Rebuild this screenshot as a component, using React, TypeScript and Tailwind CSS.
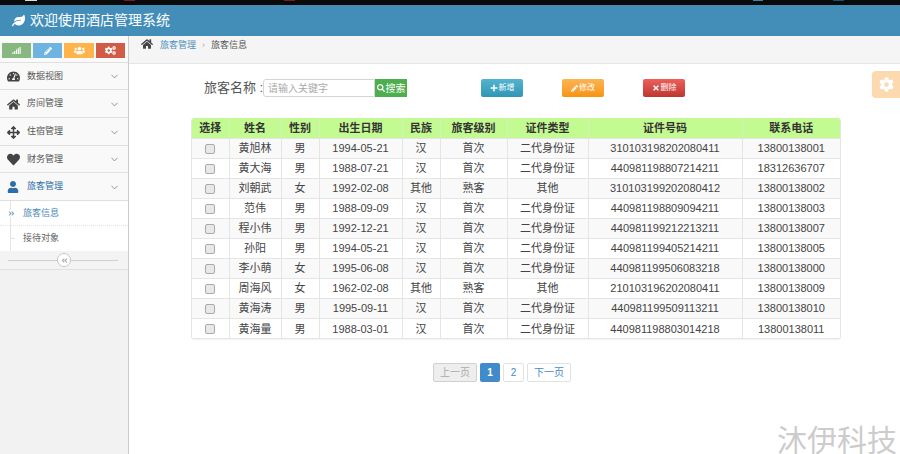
import { FaLeaf, FaSignal, FaPencilAlt, FaUsers, FaCogs, FaTachometerAlt, FaHome, FaArrowsAlt, FaHeart, FaUser, FaAngleDoubleLeft, FaAngleDoubleRight, FaSearch, FaPlus, FaTimes, FaCog } from "react-icons/fa";
import { ChevronDown } from "lucide-react";

const FONT = '"Liberation Sans", "Noto Sans CJK SC", sans-serif';

const guests = [
  ["黄旭林", "男", "1994-05-21", "汉", "首次", "二代身份证", "310103198202080411", "13800138001"],
  ["黄大海", "男", "1988-07-21", "汉", "首次", "二代身份证", "440981198807214211", "18312636707"],
  ["刘朝武", "女", "1992-02-08", "其他", "熟客", "其他", "310103199202080412", "13800138002"],
  ["范伟", "男", "1988-09-09", "汉", "首次", "二代身份证", "440981198809094211", "13800138003"],
  ["程小伟", "男", "1992-12-21", "汉", "首次", "二代身份证", "440981199212213211", "13800138007"],
  ["孙阳", "男", "1994-05-21", "汉", "首次", "二代身份证", "440981199405214211", "13800138005"],
  ["李小萌", "女", "1995-06-08", "汉", "首次", "二代身份证", "440981199506083218", "13800138000"],
  ["周海风", "女", "1962-02-08", "其他", "熟客", "其他", "210103196202080411", "13800138009"],
  ["黄海涛", "男", "1995-09-11", "汉", "首次", "二代身份证", "440981199509113211", "13800138010"],
  ["黄海量", "男", "1988-03-01", "汉", "首次", "二代身份证", "440981198803014218", "13800138011"],
];

const headers = ["选择", "姓名", "性别", "出生日期", "民族", "旅客级别", "证件类型", "证件号码", "联系电话"];
const widths = ["w-[37px]", "w-[52px]", "w-[38px]", "w-[83px]", "w-[38px]", "w-[67px]", "w-[81px]", "w-[154px]", "w-[98px]"];

const menu = [
  { label: "数据视图", height: "h-[27px]", icon: <FaTachometerAlt size={13} /> },
  { label: "房间管理", height: "h-[28px]", icon: <FaHome size={13} /> },
  { label: "住宿管理", height: "h-[28px]", icon: <FaArrowsAlt size={13} /> },
  { label: "财务管理", height: "h-[27px]", icon: <FaHeart size={13} /> },
];

function Sidebar() {
  return (
    <aside className="w-[129px] shrink-0 bg-[#f2f2f2] border-r border-[#cccccc]">
      <div className="h-[27px] flex gap-[2px] pl-[2px] pt-[7px] bg-[#fafafa] border-b border-[#e0e0e0]">
        <div className="w-[29px] h-[15px] bg-[#87b87f] flex items-center justify-center text-white"><FaSignal size={9} /></div>
        <div className="w-[29px] h-[15px] bg-[#6fb3e0] flex items-center justify-center text-white"><FaPencilAlt size={8} /></div>
        <div className="w-[30px] h-[15px] bg-[#ffb44b] flex items-center justify-center text-white"><FaUsers size={11} /></div>
        <div className="w-[29px] h-[15px] bg-[#d15b47] flex items-center justify-center text-white"><FaCogs size={11} /></div>
      </div>
      {menu.map((m) => (
        <div key={m.label} className={`${m.height} flex items-center bg-[#f9f9f9] border-b border-[#e0e0e0] text-[#555555] text-[9px] pl-[7px] pr-[8px] pt-[1px]`}>
          <span className="w-[20px] text-[#444444]">{m.icon}</span>
          <span>{m.label}</span>
          <ChevronDown size={11} strokeWidth={1.5} className="ml-auto text-[#666666]" />
        </div>
      ))}
      <div className="h-[28px] flex items-center bg-[#f9f9f9] border-b border-[#e0e0e0] text-[#2b6ea8] text-[9px] pl-[7px] pr-[8px] pt-[1px]">
        <span className="w-[20px]"><FaUser size={12} /></span>
        <span>旅客管理</span>
        <ChevronDown size={11} strokeWidth={1.5} className="ml-auto text-[#666666]" />
      </div>
      <div className="bg-white relative">
        <div className="absolute left-[10px] top-0 bottom-0 border-l border-[#e4e4e4]" />
        <div className="h-[25px] flex items-center text-[9px] text-[#4b88b7] pl-[23px] pt-[1px] relative border-b border-dotted border-[#e4e4e4]">
          <FaAngleDoubleRight size={7} className="absolute left-[8px] text-[#7ea6c4] bg-white" />
          旅客信息
        </div>
        <div className="h-[25px] flex items-center text-[9px] text-[#666666] pl-[23px] pt-[1px] relative">
          <div className="absolute left-[11px] top-[12px] w-[4px] border-t border-[#e4e4e4]" />
          接待对象
        </div>
      </div>
      <div className="h-[19px] bg-[#f3f3f3] border-b border-[#e0e0e0] flex items-center justify-center relative">
        <div className="absolute left-[8px] right-[10px] top-[9px] border-t border-[#d0d0d0]" />
        <div className="relative w-[14px] h-[14px] rounded-full bg-white border border-[#c8c8c8] flex items-center justify-center text-[#aaaaaa]">
          <FaAngleDoubleLeft size={7} />
        </div>
      </div>
    </aside>
  );
}

function Table() {
  return (
    <div className="ml-[62px] w-[650px] rounded-[3px] border border-[#e5e5e5] border-t-0 overflow-hidden shadow-[0_1px_1px_rgba(0,0,0,0.05)]">
      <table className="table-fixed border-collapse w-full text-[11px] text-[#444444]">
        <thead>
          <tr className="h-[20px] bg-[#c4fa92]">
            {headers.map((h, i) => (
              <th key={h} className={`${widths[i]} font-bold text-[#333333] text-center p-0 pt-[1px] border-r border-[#d5efbd] last:border-r-0`}>{h}</th>
            ))}
          </tr>
        </thead>
        <tbody>
          {guests.map((row, idx) => (
            <tr key={row[6]} className={idx % 2 === 0 ? "h-[20px] bg-[#f9f9f9]" : "h-[20px] bg-white"}>
              <td className="p-0 border-t border-r border-[#e5e5e5] text-center">
                <span className="inline-block w-[10px] h-[10px] rounded-[2px] border border-[#aaaaaa] bg-[#e8e8e8] align-middle" />
              </td>
              {row.map((c, i) => (
                <td key={i} className="p-0 pt-[1px] border-t border-r border-[#e5e5e5] last:border-r-0 text-center whitespace-nowrap">{c}</td>
              ))}
            </tr>
          ))}
        </tbody>
      </table>
    </div>
  );
}

export default function App() {
  return (
    <div className="w-[900px] h-[454px] overflow-hidden bg-white flex flex-col relative" style={{ fontFamily: FONT }}>
      <div className="h-[5px] bg-[#0a0a0a] shrink-0 relative">
        <div className="absolute left-[25px] top-0 w-[12px] h-[1px] bg-[#dddddd]" />
        <div className="absolute left-[124px] top-0 w-[11px] h-[1px] bg-[#7a1a24]" />
        <div className="absolute left-[284px] top-0 w-[11px] h-[1px] bg-[#7a1a24]" />
        <div className="absolute left-[753px] top-0 w-[10px] h-[1px] bg-[#4a7fa8]" />
        <div className="absolute left-[833px] top-0 w-[11px] h-[1px] bg-[#1f4f70]" />
      </div>
      <header className="h-[31px] shrink-0 bg-[#438eb9] flex items-center pl-[12px] text-white text-[14px]">
        <FaLeaf size={13} className="mr-[5px]" />
        <span>欢迎使用酒店管理系统</span>
      </header>
      <div className="flex flex-1 min-h-0">
        <Sidebar />
        <main className="flex-1 min-w-0">
          <div className="h-[28px] bg-[#f5f5f5] border-b border-[#e5e5e5] flex items-start pt-[2px] pl-[12px] text-[9px] text-[#555555]">
            <FaHome size={12} className="text-[#444444] mr-[7px]" />
            <span className="text-[#4c8fbd] mt-[1px]">旅客管理</span>
            <span className="mx-[6px] mt-[1px] text-[#aaaaaa]">›</span>
            <span className="mt-[1px]">旅客信息</span>
          </div>
          <div className="h-[54px] flex items-start pt-[15px]">
            <span className="ml-[75px] w-[59px] text-[13px] text-[#555555] leading-[18px] whitespace-nowrap">旅客名称 :</span>
            <div className="w-[112px] h-[18px] rounded-l-[3px] border border-[#d5d5d5] text-[10px] text-[#aaaaaa] pl-[4px] flex items-center">请输入关键字</div>
            <div className="w-[32px] h-[18px] bg-[#4cae4c] text-white text-[10px] flex items-center justify-center"><FaSearch size={8} className="mr-[1px]" />搜索</div>
            <div className="ml-[74px] w-[42px] h-[18px] rounded-[2px] bg-linear-to-b from-[#54b4d0] to-[#2f96b4] text-white text-[8px] flex items-center justify-center"><FaPlus size={8} className="mr-[1px]" />新增</div>
            <div className="ml-[39px] w-[42px] h-[18px] rounded-[2px] bg-linear-to-b from-[#fbb450] to-[#f89406] text-white text-[8px] flex items-center justify-center"><FaPencilAlt size={7} className="mr-[1px]" />修改</div>
            <div className="ml-[39px] w-[42px] h-[18px] rounded-[2px] bg-linear-to-b from-[#ee5f5b] to-[#bd362f] text-white text-[8px] flex items-center justify-center"><FaTimes size={8} className="mr-[1px]" />删除</div>
          </div>
          <Table />
          <div className="flex ml-[304px] mt-[24px] gap-[3px] text-[10px] h-[19px]">
            <div className="w-[44px] rounded-[2px] border border-[#d0d0d0] bg-[#eeeeee] text-[#aaaaaa] flex items-center justify-center">上一页</div>
            <div className="w-[20px] rounded-[2px] bg-[#428bca] text-white font-bold flex items-center justify-center">1</div>
            <div className="w-[21px] rounded-[2px] border border-[#e2e2e2] text-[#428bca] flex items-center justify-center">2</div>
            <div className="w-[44px] rounded-[2px] border border-[#e2e2e2] text-[#428bca] flex items-center justify-center">下一页</div>
          </div>
        </main>
      </div>
      <div className="absolute right-0 top-[71px] w-[28px] h-[27px] rounded-l-[4px] bg-[#fcd9ae] flex items-center justify-center text-white">
        <FaCog size={15} />
      </div>
      <div className="absolute left-[777px] top-[426px] text-[30px] leading-[30px] whitespace-nowrap text-[#cccccc]">沐伊科技</div>
    </div>
  );
}
